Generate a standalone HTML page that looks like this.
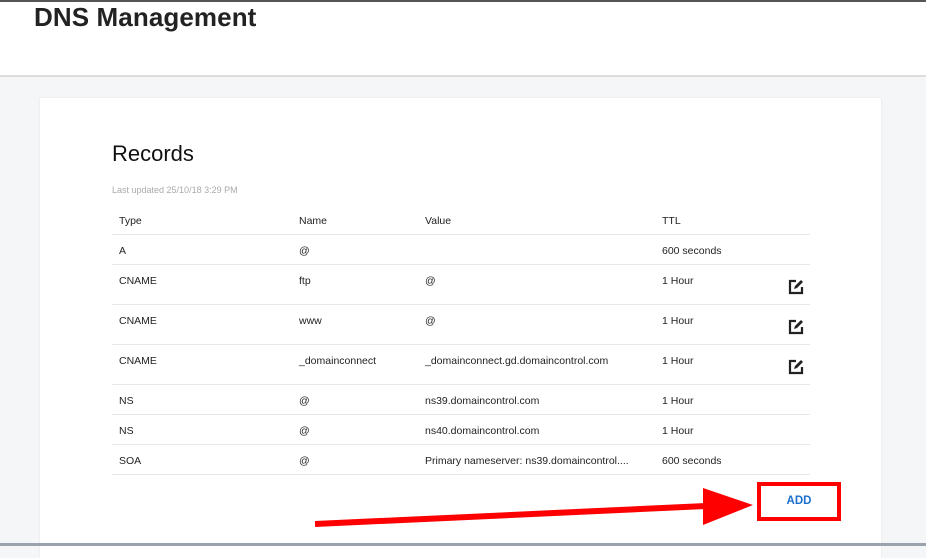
<!DOCTYPE html>
<html><head><style>
*{margin:0;padding:0;box-sizing:border-box}
body{width:926px;height:546px;overflow:hidden;background:#f5f6f7;font-family:"Liberation Sans",sans-serif;position:relative;color:#222}
.top{position:absolute;left:0;top:0;width:926px;height:77px;background:#fff;border-top:2px solid #555;border-bottom:2px solid #ddd}
h1{position:absolute;left:34px;top:0px;font-size:26px;font-weight:bold;color:#222;letter-spacing:0.1px}
.card{position:absolute;left:40px;top:98px;width:841px;height:460px;background:#fff;box-shadow:0 0 2px #e4e4e4}
h2{position:absolute;left:112px;top:141px;font-size:22px;font-weight:normal;color:#111}
.upd{position:absolute;left:112px;top:185px;font-size:9px;color:#aaa}
.row{position:absolute;left:112px;width:698px;border-bottom:1px solid #e8e8e8;font-size:10.5px;color:#222}
.row span{position:absolute;top:10px}
.c1{left:7px}.c2{left:187px}.c3{left:313px}.c4{left:550px}
.ed{position:absolute;left:676px;top:14px}
.bottom{position:absolute;left:0;top:543px;width:926px;height:3px;background:#9aa3ab}
</style></head><body>
<div class="top"><h1>DNS Management</h1></div>
<div class="card"></div>
<h2>Records</h2>
<div class="upd">Last updated 25/10/18 3:29 PM</div>
<div class="row" style="top:205px;height:30px"><span class="c1">Type</span><span class="c2">Name</span><span class="c3">Value</span><span class="c4">TTL</span></div>
<div class="row" style="top:235px;height:30px"><span class="c1">A</span><span class="c2">@</span><span class="c4">600 seconds</span></div>
<div class="row" style="top:265px;height:40px"><span class="c1">CNAME</span><span class="c2">ftp</span><span class="c3">@</span><span class="c4">1 Hour</span><svg class="ed" width="16" height="16" viewBox="0 0 16 16"><path d="M8 2H2v12h12V8" fill="none" stroke="#222" stroke-width="2.2"/><path d="M6 10l1-3 6-6 2 2-6 6z" fill="#222"/></svg></div>
<div class="row" style="top:305px;height:40px"><span class="c1">CNAME</span><span class="c2">www</span><span class="c3">@</span><span class="c4">1 Hour</span><svg class="ed" width="16" height="16" viewBox="0 0 16 16"><path d="M8 2H2v12h12V8" fill="none" stroke="#222" stroke-width="2.2"/><path d="M6 10l1-3 6-6 2 2-6 6z" fill="#222"/></svg></div>
<div class="row" style="top:345px;height:40px"><span class="c1">CNAME</span><span class="c2">_domainconnect</span><span class="c3">_domainconnect.gd.domaincontrol.com</span><span class="c4">1 Hour</span><svg class="ed" width="16" height="16" viewBox="0 0 16 16"><path d="M8 2H2v12h12V8" fill="none" stroke="#222" stroke-width="2.2"/><path d="M6 10l1-3 6-6 2 2-6 6z" fill="#222"/></svg></div>
<div class="row" style="top:385px;height:30px"><span class="c1">NS</span><span class="c2">@</span><span class="c3">ns39.domaincontrol.com</span><span class="c4">1 Hour</span></div>
<div class="row" style="top:415px;height:30px"><span class="c1">NS</span><span class="c2">@</span><span class="c3">ns40.domaincontrol.com</span><span class="c4">1 Hour</span></div>
<div class="row" style="top:445px;height:30px"><span class="c1">SOA</span><span class="c2">@</span><span class="c3">Primary nameserver: ns39.domaincontrol....</span><span class="c4">600 seconds</span></div>
<div style="position:absolute;left:757px;top:482px;width:84px;height:39px;border:4px solid #f00;color:#1a6fd0;font-weight:bold;font-size:11.5px;text-align:center;line-height:31px">ADD</div>
<svg style="position:absolute;left:0;top:0" width="926" height="546"><path d="M315 524L706 506" stroke="#f00" stroke-width="6"/><path d="M703 488L753 505L703 525z" fill="#f00"/></svg>
<div class="bottom"></div>
</body></html>
